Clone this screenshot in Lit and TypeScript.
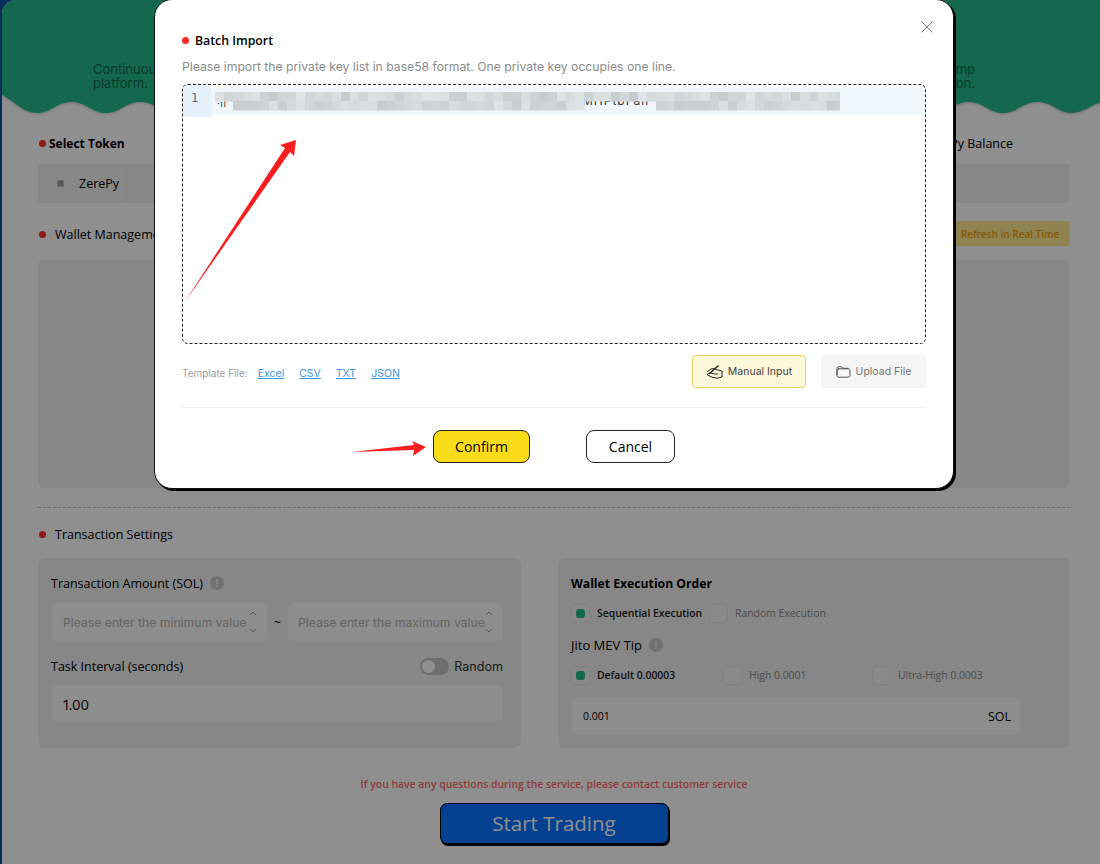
import { LitElement, html, css, svg } from 'lit';
import { customElement } from 'lit/decorators.js';

// wave under the green header, troughs are 69px apart
function wavePath() {
  let d = 'M0 0 C12 6 21 18 35 18';
  for (let x = 35; x < 1098; x += 69) {
    d += ` C${x + 14} 18 ${x + 20} 7 ${x + 34.5} 7 C${x + 49} 7 ${x + 55} 18 ${x + 69} 18`;
  }
  return d + ' L1098 0 Z';
}

// blurred private key, same pseudo random cells on each render
function mosaicCells() {
  const cells = [];
  let seed = 7;
  for (let x = 0; x < 625; x += 9) {
    for (let row = 0; row < 2; row++) {
      seed = (seed * 73 + 41) % 101;
      const hidden = row === 1 && ((x > 360 && x < 440) || x < 18);
      if (hidden) continue;
      const v = 198 + (seed % 26);
      cells.push(svg`<rect x=${x} y=${row * 9} width="9.5" height="9.5" fill=${`rgb(${v},${v + 5},${v + 7})`}></rect>`);
    }
  }
  return cells;
}

@customElement('app-root')
export class AppRoot extends LitElement {
  static styles = css`
    :host {
      display: block;
      position: relative;
      width: 1100px;
      height: 864px;
      overflow: hidden;
      background: #13539f;
      font-family: 'Open Sans', 'Noto Sans', sans-serif;
      color: #000;
    }

    .page {
      margin-left: 2px;
      height: 864px;
      background: #fff;
      border-radius: 14px 0 0 0;
      overflow: hidden;
    }

    .hero-top {
      height: 95px;
      box-sizing: border-box;
      padding: 62px 125px 0 91px;
      background: #24b98a;
      color: #12684e;
      font: 13px/14px Inter, sans-serif;
    }

    .hero-top div {
      text-align: justify;
      text-align-last: justify;
    }

    .wave {
      display: block;
      width: 1098px;
      height: 18px;
      fill: #24b98a;
      overflow: visible;
      filter: drop-shadow(0 1px 1px rgba(0, 0, 0, 0.2));
    }

    .content {
      padding: 0 30px 0 36px;
    }

    .heading {
      display: flex;
      align-items: center;
      height: 18px;
      font-size: 12.5px;
    }

    .dot {
      flex: none;
      width: 7px;
      height: 7px;
      border-radius: 50%;
      background: #ff2a2a;
    }

    .token-head {
      justify-content: space-between;
      margin-top: 21px;
      padding: 0 57px 0 1px;
    }

    .token-head strong {
      margin-left: 3px;
      font-size: 12px;
      font-weight: 700;
    }

    .token-head .left,
    .wallet-head .left {
      display: flex;
      align-items: center;
    }

    .token-bar {
      display: flex;
      align-items: center;
      height: 39px;
      margin-top: 12px;
      background: #f0f0f0;
      border-radius: 4px;
    }

    .token-tab {
      display: flex;
      align-items: center;
      width: 89px;
      height: 100%;
      box-sizing: border-box;
      padding-left: 19px;
      border-right: 1px solid #e6e6e6;
      font-size: 12.5px;
      font-weight: 500;
    }

    .token-tab i {
      width: 5px;
      height: 5px;
      margin-right: 15px;
      background: #999;
      border: 1px solid #c4c4c4;
    }

    .wallet-head {
      justify-content: space-between;
      height: 25px;
      margin-top: 18px;
      padding-left: 1px;
    }

    .wallet-head .left {
      padding-top: 1px;
    }

    .wallet-head .dot,
    .tx-head .dot {
      margin-right: 9px;
    }

    .refresh {
      width: 120px;
      height: 25px;
      border-radius: 3px;
      background: #ffea8f;
      color: #f0a010;
      font-size: 10px;
      font-weight: 600;
      line-height: 26px;
      text-align: center;
    }

    .wallet-panel {
      height: 228px;
      margin-top: 14px;
      background: #f0f0f0;
      border-radius: 6px;
    }

    .rule {
      margin-top: 19px;
      border-top: 1px dashed #bdbdbd;
    }

    .tx-head {
      margin-top: 17px;
      padding-left: 1px;
    }

    .cards {
      display: grid;
      grid-template-columns: 483px 512px;
      gap: 37px;
      margin-top: 15px;
    }

    .card {
      height: 190px;
      box-sizing: border-box;
      padding: 17px 18px 0 13px;
      background: #f0f0f0;
      border-radius: 7px;
    }

    .label {
      display: flex;
      align-items: center;
      height: 16px;
      font-size: 12.5px;
      font-weight: 500;
    }

    .label.bold {
      font-size: 12.2px;
      font-weight: 700;
    }

    .info {
      width: 14px;
      height: 14px;
      margin-left: 7px;
      border-radius: 50%;
      background: #c9c9c9;
      color: #f4f4f4;
      font-size: 10px;
      font-weight: 700;
      line-height: 14px;
      text-align: center;
    }

    .range {
      display: grid;
      grid-template-columns: 216px 1fr 215px;
      align-items: center;
      margin-top: 12px;
    }

    .range .tilde {
      text-align: center;
      font-size: 12px;
    }

    .field {
      display: flex;
      align-items: center;
      height: 38px;
      box-sizing: border-box;
      padding-left: 12px;
      background: #fbfbfb;
      border-radius: 5px;
      font: 12.2px Inter, sans-serif;
    }

    .field.tight {
      padding-left: 10px;
    }

    .placeholder {
      flex: 1;
      min-width: 0;
      white-space: nowrap;
      color: #b4b4b4;
    }

    .stepper {
      display: flex;
      flex-direction: column;
      justify-content: space-between;
      width: 20px;
      height: 22px;
      flex: none;
    }

    .stepper svg {
      display: block;
      width: 8px;
      height: 5px;
      margin-left: 2px;
      fill: none;
      stroke: #999;
    }

    .interval {
      justify-content: space-between;
      margin-top: 16px;
      height: 18px;
    }

    .switch {
      display: flex;
      align-items: center;
      font: 12.6px Inter, sans-serif;
      color: #333;
    }

    .track {
      display: flex;
      align-items: center;
      width: 29px;
      height: 17px;
      margin-right: 5px;
      border-radius: 9px;
      background: #c4c4c4;
    }

    .knob {
      width: 13px;
      height: 13px;
      margin-left: 2px;
      border-radius: 50%;
      background: #fff;
    }

    .interval-field {
      height: 36px;
      margin-top: 10px;
      padding-top: 4px;
      color: #111;
      font-size: 13.5px;
    }

    .options {
      display: flex;
      align-items: center;
      height: 20px;
      font-size: 10.4px;
      color: #8a8a8a;
    }

    .order {
      margin-top: 12px;
    }

    .tip-label {
      margin-top: 14px;
      font-weight: 400;
      font-size: 13px;
    }

    .tips {
      margin-top: 12px;
    }

    .option {
      display: flex;
      align-items: center;
      flex: none;
    }

    .option.on {
      color: #222;
      font-weight: 600;
    }

    .box {
      display: flex;
      align-items: center;
      justify-content: center;
      width: 17px;
      height: 17px;
      margin-right: 7px;
      border: 1px solid #e6e6e6;
      border-radius: 4px;
      background: #f4f4f4;
    }

    .on .box i {
      width: 9px;
      height: 9px;
      border-radius: 3px;
      background: #24b98a;
    }

    .sol-field {
      justify-content: space-between;
      width: 450px;
      height: 38px;
      margin-top: 12px;
      padding: 0 10px 0 12px;
      font-family: 'Open Sans', sans-serif;
      font-size: 10.5px;
      font-weight: 500;
    }

    .sol-field span:last-child {
      font-size: 12.5px;
      font-weight: 400;
    }

    .notice {
      margin-top: 28px;
      color: #ff6875;
      font-size: 10.4px;
      font-weight: 600;
      line-height: 16px;
      text-align: center;
    }

    .start {
      display: block;
      width: 229px;
      height: 41px;
      margin: 11px auto 0;
      box-sizing: border-box;
      border: 1px solid #000;
      border-radius: 7px;
      box-shadow: 1px 2px 0 #000;
      background: #0772ff;
      color: #fff;
      font: 20.5px/39px 'Open Sans', sans-serif;
      text-align: center;
    }

    .scrim {
      position: absolute;
      inset: 0;
      background: rgba(0, 0, 0, 0.44);
    }

    .modal {
      position: absolute;
      left: 154px;
      top: -1px;
      width: 800px;
      height: 490px;
      box-sizing: border-box;
      padding: 31px 27px 0;
      background: #fff;
      border: 1px solid #111;
      border-radius: 18px;
      box-shadow: 2px 2px 0 #000;
    }

    .close {
      position: absolute;
      right: 20px;
      top: 21px;
      width: 12px;
      height: 12px;
      stroke: #777;
      fill: none;
    }

    .modal-title {
      display: flex;
      align-items: center;
      height: 18px;
      font-size: 12.3px;
      font-weight: 600;
    }

    .modal-title .dot {
      margin-right: 6px;
    }

    .hint {
      margin-top: 9px;
      color: #8b8b8b;
      font: 12.2px/18px Inter, sans-serif;
    }

    .editor {
      display: flex;
      height: 260px;
      margin-top: 8px;
      box-sizing: border-box;
      border: 1px dashed #222;
      border-radius: 6px;
      overflow: hidden;
    }

    .gutter {
      width: 28px;
      height: 32px;
      box-sizing: border-box;
      padding: 6px 0 0 8px;
      background: #e6f1fb;
      color: #5b6b7a;
      font: 12px/14px 'DejaVu Sans Mono', monospace;
    }

    .line {
      position: relative;
      flex: 1;
      height: 27px;
      margin-top: 3px;
      background: #eff7fc;
    }

    .fragment {
      position: absolute;
      top: 8px;
      font: 12px/10px Inter, sans-serif;
      color: #333;
      letter-spacing: 1px;
    }

    .fragment.key {
      left: 371px;
    }

    .fragment.start-key {
      left: 6px;
      top: 11px;
      font-size: 9px;
      color: #222;
    }

    .mosaic {
      position: absolute;
      left: 4px;
      top: 4px;
      width: 625px;
      height: 19px;
      filter: blur(0.5px);
    }

    .toolbar {
      display: flex;
      align-items: center;
      height: 33px;
      margin-top: 11px;
    }

    .template {
      padding-top: 3px;
      margin-right: 10px;
      color: #a0a0a0;
      font: 10px Inter, sans-serif;
    }

    .toolbar a {
      margin-right: 15px;
      padding-top: 3px;
      color: #3b95e8;
      font: 10.5px Inter, sans-serif;
      text-decoration: underline;
    }

    .mode {
      display: flex;
      align-items: center;
      justify-content: center;
      gap: 5px;
      height: 33px;
      box-sizing: border-box;
      border-radius: 4px;
      font: 10.5px Inter, sans-serif;
    }

    .mode svg {
      fill: none;
      stroke-linecap: round;
      stroke-linejoin: round;
    }

    .mode.manual {
      width: 114px;
      margin-left: auto;
      background: #fef9dc;
      border: 1px solid #f0cf60;
      color: #444;
      stroke: #222;
    }

    .mode.upload {
      width: 105px;
      margin-left: 15px;
      background: #f5f5f5;
      color: #777;
      stroke: #555;
    }

    .divider {
      margin-top: 19px;
      border-top: 1px solid #eee;
    }

    .actions {
      display: flex;
      justify-content: center;
      gap: 56px;
      margin-top: 22px;
    }

    .actions div {
      height: 33px;
      box-sizing: border-box;
      border: 1px solid #222;
      border-radius: 8px;
      font-size: 14px;
      line-height: 31px;
      text-align: center;
    }

    .confirm {
      width: 97px;
      background: #fadc19;
    }

    .cancel {
      width: 89px;
      background: #fff;
    }

    .arrows {
      position: absolute;
      left: 0;
      top: 0;
      width: 1100px;
      height: 864px;
      fill: #fa1f1f;
      pointer-events: none;
    }
  `;

  private stepper() {
    return html`<div class="stepper">
      <svg viewBox="0 0 8 5"><path d="M1 4l3-3 3 3"></path></svg>
      <svg viewBox="0 0 8 5"><path d="M1 1l3 3 3-3"></path></svg>
    </div>`;
  }

  private option(label: string, on: boolean, width?: number) {
    return html`<div class="option ${on ? 'on' : ''}" style=${width ? `width:${width}px` : ''}>
      <span class="box"><i></i></span>${label}
    </div>`;
  }

  render() {
    return html`
      <div class="page">
        <div class="hero-top">
          <div>Continuous volume boosting for tokens launched on the Raydium and Pump</div>
          <div>platform. The tool runs a steady market making task for each selected wallet and token position.</div>
        </div>
        <svg class="wave" viewBox="0 0 1098 18"><path d=${wavePath()}></path></svg>

        <div class="content">
          <div class="heading token-head">
            <div class="left"><span class="dot"></span><strong>Select Token</strong></div>
            <span>ZerePy Balance</span>
          </div>
          <div class="token-bar">
            <div class="token-tab"><i></i>ZerePy</div>
          </div>

          <div class="heading wallet-head">
            <div class="left"><span class="dot"></span>Wallet Management</div>
            <div class="refresh">Refresh in Real Time</div>
          </div>
          <div class="wallet-panel"></div>
          <div class="rule"></div>

          <div class="heading tx-head"><span class="dot"></span>Transaction Settings</div>
          <div class="cards">
            <div class="card">
              <div class="label">Transaction Amount (SOL)<span class="info">!</span></div>
              <div class="range">
                <div class="field"><span class="placeholder">Please enter the minimum value</span>${this.stepper()}</div>
                <span class="tilde">~</span>
                <div class="field tight"><span class="placeholder">Please enter the maximum value</span>${this.stepper()}</div>
              </div>
              <div class="label interval">
                <span>Task Interval (seconds)</span>
                <div class="switch"><span class="track"><span class="knob"></span></span>Random</div>
              </div>
              <div class="field interval-field">1.00</div>
            </div>

            <div class="card">
              <div class="label bold">Wallet Execution Order</div>
              <div class="options order">
                ${this.option('Sequential Execution', true, 138)}
                ${this.option('Random Execution', false)}
              </div>
              <div class="label tip-label">Jito MEV Tip<span class="info">!</span></div>
              <div class="options tips">
                ${this.option('Default 0.00003', true, 152)}
                ${this.option('High 0.0001', false, 149)}
                ${this.option('Ultra-High 0.0003', false)}
              </div>
              <div class="field sol-field"><span>0.001</span><span>SOL</span></div>
            </div>
          </div>

          <div class="notice">If you have any questions during the service, please contact customer service</div>
          <div class="start">Start Trading</div>
        </div>
      </div>

      <div class="scrim"></div>

      <div class="modal">
        <svg class="close" viewBox="0 0 12 12"><path d="M.5.5l11 11M11.500 .5l-11 11"></path></svg>
        <div class="modal-title"><span class="dot"></span>Batch Import</div>
        <div class="hint">Please import the private key list in base58 format. One private key occupies one line.</div>
        <div class="editor">
          <div class="gutter">1</div>
          <div class="line">
            <span class="fragment start-key">·ıl</span>
            <span class="fragment key">MHPtbFali</span>
            <svg class="mosaic" viewBox="0 0 625 19">${mosaicCells()}</svg>
          </div>
        </div>
        <div class="toolbar">
          <span class="template">Template File:</span>
          <a>Excel</a><a>CSV</a><a>TXT</a><a>JSON</a>
          <div class="mode manual">
            <svg width="17" height="14" viewBox="0 0 17 14">
              <path d="M1.500 6.500L5 4l2.500-.5 2 1L16 6v6l-5 1.200-5-1-5-2.500 3-2 4.500 1.300h3"></path>
              <path stroke-width="1.600" d="M12 1L3.500 8.500"></path>
            </svg>
            Manual Input
          </div>
          <div class="mode upload">
            <svg width="15" height="12" viewBox="0 0 15 12">
              <path d="M1 9V2.200A1.400 1.400 0 0 1 2.400.8h3.200l1.200 1.500h5.400"></path>
              <rect x="1" y="2.800" width="13" height="8.400" rx="1.800"></rect>
            </svg>
            Upload File
          </div>
        </div>
        <div class="divider"></div>
        <div class="actions">
          <div class="confirm">Confirm</div>
          <div class="cancel">Cancel</div>
        </div>
      </div>

      <svg class="arrows" viewBox="0 0 1100 864">
        <path d="M184 303L285 148 280 145 296 140 294 156 290 152Z"></path>
        <path d="M352 452L414 445 412 441 426 447 413 456 414 450Z"></path>
      </svg>
    `;
  }
}
